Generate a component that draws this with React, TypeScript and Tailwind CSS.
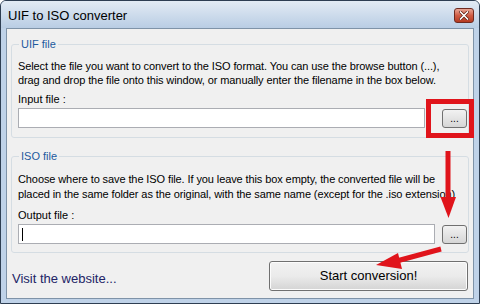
export default function App() {
  const font = { fontFamily: "'Liberation Sans', Arial, sans-serif" };
  return (
    <div
      className="relative w-[480px] h-[304px] overflow-hidden bg-[#bfd2e8] border border-[#2e3e52] rounded-t-[6px] flex flex-col text-black"
      style={font}
    >
      {/* title bar */}
      <div className="h-[27px] shrink-0 flex items-center justify-between pl-[7px] pr-[5px] bg-gradient-to-b from-[#e3ebf4] to-[#b9cde4]">
        <span className="text-[13px] text-black mt-[3px]">UIF to ISO converter</span>
        <div className="w-[20px] h-[15px] mt-[1px] rounded-[3px] border border-[#6e2a20] bg-gradient-to-b from-[#e7a595] via-[#cf5c45] to-[#b5391f] flex items-center justify-center">
          <svg width="10" height="9" viewBox="0 0 10 9">
            <path d="M1.5 1 L8.5 8 M8.5 1 L1.5 8" stroke="#5a1a10" strokeWidth="3" strokeLinecap="square" />
            <path d="M1.5 1 L8.5 8 M8.5 1 L1.5 8" stroke="#ffffff" strokeWidth="1.6" strokeLinecap="square" />
          </svg>
        </div>
      </div>

      {/* client area */}
      <div className="flex-1 mx-[5px] mb-[4px] bg-[#f0f0f0] border border-[#7f93a8] flex flex-col px-[4px] text-[11px] leading-[14px]">
        <fieldset className="mt-[9px] border border-[#d5dde3] rounded-[3px] pl-[6px] pr-[1px] pb-[9px]">
          <legend className="ml-[1px] px-[2px] text-[#1d5a9e] text-[11px] leading-[13px]">UIF file</legend>
          <p className="mt-[8px] tracking-[-0.1px]">
            Select the file you want to convert to the ISO format. You can use the browse button (...),
            <br />
            drag and drop the file onto this window, or manually enter the filename in the box below.
          </p>
          <div className="mt-[5px]">Input file :</div>
          <div className="mt-[2px] flex items-center">
            <div className="w-[407px] h-[20px] bg-white border border-[#abadb3]" />
            <div className="flex-1" />
            <BrowseButton />
          </div>
        </fieldset>

        <fieldset className="mt-[12px] border border-[#d5dde3] rounded-[3px] pl-[6px] pr-[1px] pb-[8px]">
          <legend className="ml-[1px] px-[2px] text-[#1d5a9e] text-[11px] leading-[13px]">ISO file</legend>
          <p className="mt-[9px] tracking-[-0.1px] leading-[15px]">
            Choose where to save the ISO file. If you leave this box empty, the converted file will be
            <br />
            placed in the same folder as the original, with the same name (except for the .iso extension)
          </p>
          <div className="mt-[6px]">Output file :</div>
          <div className="mt-[2px] flex items-center">
            <div className="w-[417px] h-[20px] bg-white border border-[#abadb3] flex items-center pl-[3px]">
              <div className="w-px h-[13px] bg-black" />
            </div>
            <div className="flex-1" />
            <BrowseButton />
          </div>
        </fieldset>

        <div className="mt-[8px] flex items-center justify-between pl-[1px] pr-[1px]">
          <span className="text-[13px] text-[#222466] mt-[5px]">Visit the website...</span>
          <button className="w-[199px] h-[30px] rounded-[3px] border border-[#707070] bg-gradient-to-b from-[#f2f2f2] via-[#ebebeb] to-[#d4d4d4] text-[13px] text-black shadow-[inset_0_0_0_1px_#fcfcfc]">
            Start conversion!
          </button>
        </div>
      </div>

      {/* annotations drawn over the screenshot */}
      <div className="absolute left-[425px] top-[98px] w-[48px] h-[39px] border-[5px] border-[#e0141b]" />
      <svg className="absolute left-0 top-0" width="480" height="304" viewBox="0 0 480 304">
        <path d="M447 150 L447 198" stroke="#e0141b" strokeWidth="5" />
        <path d="M439.5 196 L455 196 L447.5 217 Z" fill="#e0141b" />
        <path d="M440 248 L392 261" stroke="#e0141b" strokeWidth="5" />
        <path d="M397 252 L401 268 L375 264 Z" fill="#e0141b" />
      </svg>
    </div>
  );
}

function BrowseButton() {
  return (
    <button className="w-[25px] h-[19px] rounded-[3px] border border-[#707070] bg-gradient-to-b from-[#f2f2f2] to-[#d6d6d6] text-[10px] leading-[10px] text-black flex items-end justify-center pb-[3px]">
      ...
    </button>
  );
}
